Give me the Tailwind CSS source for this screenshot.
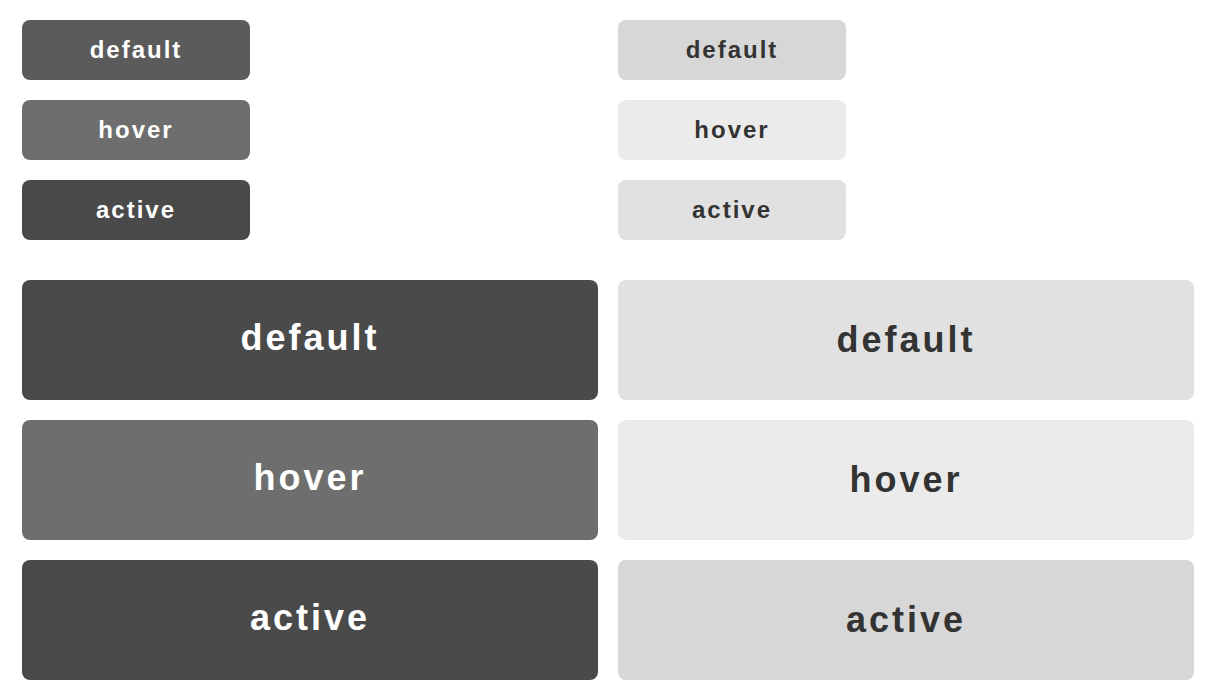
<!DOCTYPE html>
<html lang="en">
<head>
<meta charset="utf-8">
<meta name="viewport" content="width=device-width, initial-scale=1">
<title>Button states</title>
<script src="https://cdn.jsdelivr.net/npm/@tailwindcss/browser@4"></script>
</head>
<body class="bg-white font-['Liberation_Sans',Arial,sans-serif] font-bold antialiased">
<main class="grid grid-cols-2 gap-x-5 gap-y-10 px-[22px] py-5">
  <section class="flex flex-col items-start gap-5 text-2xl tracking-[2px] text-white" aria-label="Small dark buttons">
    <button type="button" class="h-15 w-57 rounded-lg bg-[#5b5b5b]">default</button>
    <button type="button" class="h-15 w-57 rounded-lg bg-[#6e6e6e]">hover</button>
    <button type="button" class="h-15 w-57 rounded-lg bg-[#4a4a4a]">active</button>
  </section>
  <section class="flex flex-col items-start gap-5 text-2xl tracking-[2px] text-[#333333]" aria-label="Small light buttons">
    <button type="button" class="h-15 w-57 rounded-lg bg-[#d7d7d7]">default</button>
    <button type="button" class="h-15 w-57 rounded-lg bg-[#ebebeb]">hover</button>
    <button type="button" class="h-15 w-57 rounded-lg bg-[#e1e1e1]">active</button>
  </section>
  <section class="flex flex-col gap-5 text-4xl tracking-[3px] text-white" aria-label="Large dark buttons">
    <button type="button" class="h-30 rounded-lg bg-[#4a4a4a] pb-1">default</button>
    <button type="button" class="h-30 rounded-lg bg-[#6e6e6e] pb-1">hover</button>
    <button type="button" class="h-30 rounded-lg bg-[#4a4a4a] pb-1">active</button>
  </section>
  <section class="flex flex-col gap-5 text-4xl tracking-[3px] text-[#333333]" aria-label="Large light buttons">
    <button type="button" class="h-30 rounded-lg bg-[#e1e1e1]">default</button>
    <button type="button" class="h-30 rounded-lg bg-[#ebebeb]">hover</button>
    <button type="button" class="h-30 rounded-lg bg-[#d7d7d7]">active</button>
  </section>
</main>
</body>
</html>
